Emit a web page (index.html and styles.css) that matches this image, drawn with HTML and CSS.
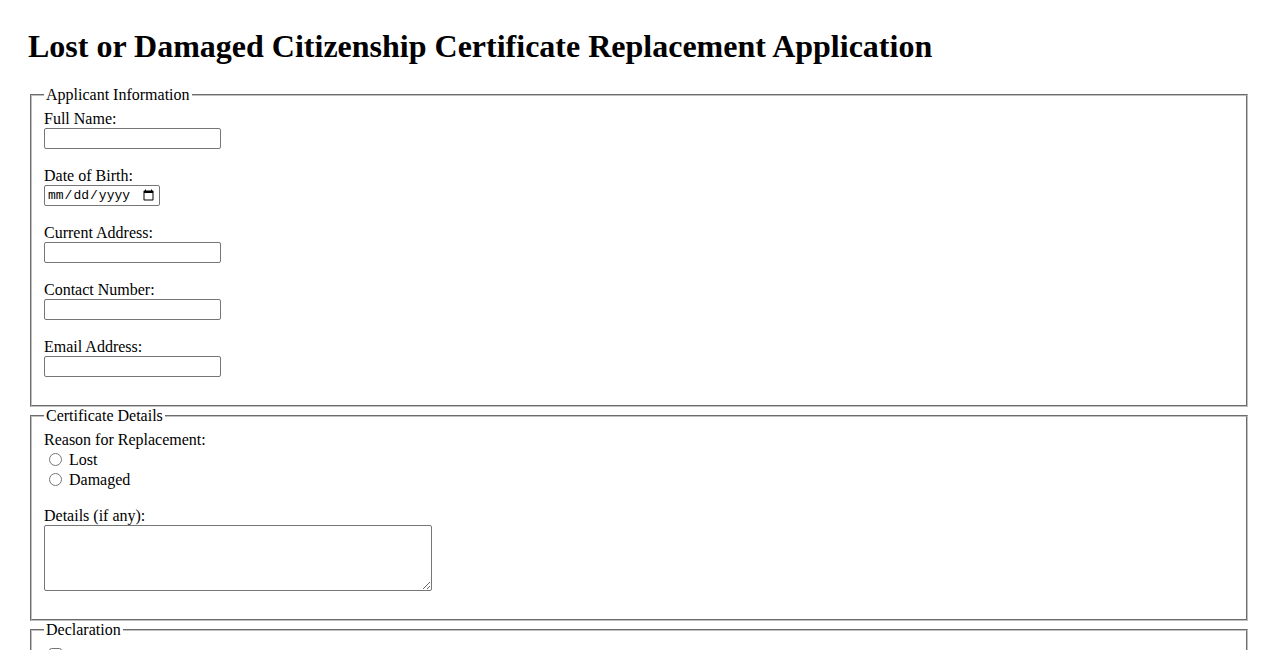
FILE: index.html
```html
<!DOCTYPE html>
<html lang="en">
<head>
<meta charset="utf-8">
<title>Citizenship Certificate Replacement</title>
<link rel="stylesheet" href="styles.css">
</head>
<body>
<h1 class="title">Lost or Damaged Citizenship Certificate Replacement Application</h1>
<form class="form">
  <fieldset class="group">
    <legend class="legend">Applicant Information</legend>
    <div class="field"><label class="lbl" for="name">Full Name:</label><input class="text" type="text" id="name"></div>
    <div class="field"><label class="lbl" for="dob">Date of Birth:</label><input class="date" type="date" id="dob"></div>
    <div class="field"><label class="lbl" for="addr">Current Address:</label><input class="text" type="text" id="addr"></div>
    <div class="field"><label class="lbl" for="phone">Contact Number:</label><input class="text" type="tel" id="phone"></div>
    <div class="field"><label class="lbl" for="email">Email Address:</label><input class="text" type="email" id="email"></div>
  </fieldset>
  <fieldset class="group">
    <legend class="legend">Certificate Details</legend>
    <div class="field">
      <span class="lbl">Reason for Replacement:</span>
      <div class="option"><input class="radio" type="radio" name="reason" id="lost"> <label for="lost">Lost</label></div>
      <div class="option"><input class="radio" type="radio" name="reason" id="damaged"> <label for="damaged">Damaged</label></div>
    </div>
    <div class="field last"><label class="lbl" for="details">Details (if any):</label><textarea class="area" id="details"></textarea></div>
  </fieldset>
  <fieldset class="group">
    <legend class="legend">Declaration</legend>
    <div class="option decl"><input class="check" type="checkbox" id="declare"> <label for="declare">I hereby declare that the information provided above is true and correct.</label></div>
  </fieldset>
</form>
</body>
</html>
```
FILE: styles.css
```css
html, body {
  background: #fff;
}
body {
  margin: 0;
  padding: 28px;
  font-family: "Liberation Serif", "Times New Roman", serif;
  font-size: 16px;
  color: #000;
}
.title {
  margin: 0 0 21.4px;
  font-size: 32px;
  line-height: 37px;
  font-weight: bold;
}
.form {
  margin: 0;
}
.group {
  margin: 0 2px;
  padding: 5.6px 12px 10px;
  border: 2px groove rgb(192, 192, 192);
}
.legend {
  padding: 0 2px;
}
.field {
  margin-bottom: 17.6px;
}
.field.last {
  margin-bottom: 18px;
}
.lbl {
  display: block;
  line-height: 18.4px;
}
.text, .date {
  display: block;
  box-sizing: border-box;
  height: 21px;
  margin: 0;
  padding: 1px 2px;
  border: 1px solid #767676;
  border-radius: 2px;
  background: #fff;
  font-family: "Liberation Sans", Arial, sans-serif;
  font-size: 13.33px;
}
.text {
  width: 177px;
}
.date {
  width: 116px;
  font-family: "Liberation Mono", "DejaVu Sans Mono", monospace;
  font-size: 13px;
  color: #000;
}
.option {
  display: block;
  height: 20px;
  line-height: 18.4px;
}
.option.decl {
  padding-top: 3px;
}
.radio {
  width: 13px;
  height: 13px;
  margin: 4px 3px 0 5px;
  vertical-align: -1px;
}
.check {
  width: 13px;
  height: 13px;
  margin: 0 3px 0 5px;
  vertical-align: 2px;
}
.area {
  display: block;
  box-sizing: border-box;
  width: 388px;
  height: 66px;
  margin: 0;
  padding: 2px;
  border: 1px solid #767676;
  border-radius: 2px;
  font-family: "Liberation Mono", monospace;
  font-size: 13.33px;
}
```
